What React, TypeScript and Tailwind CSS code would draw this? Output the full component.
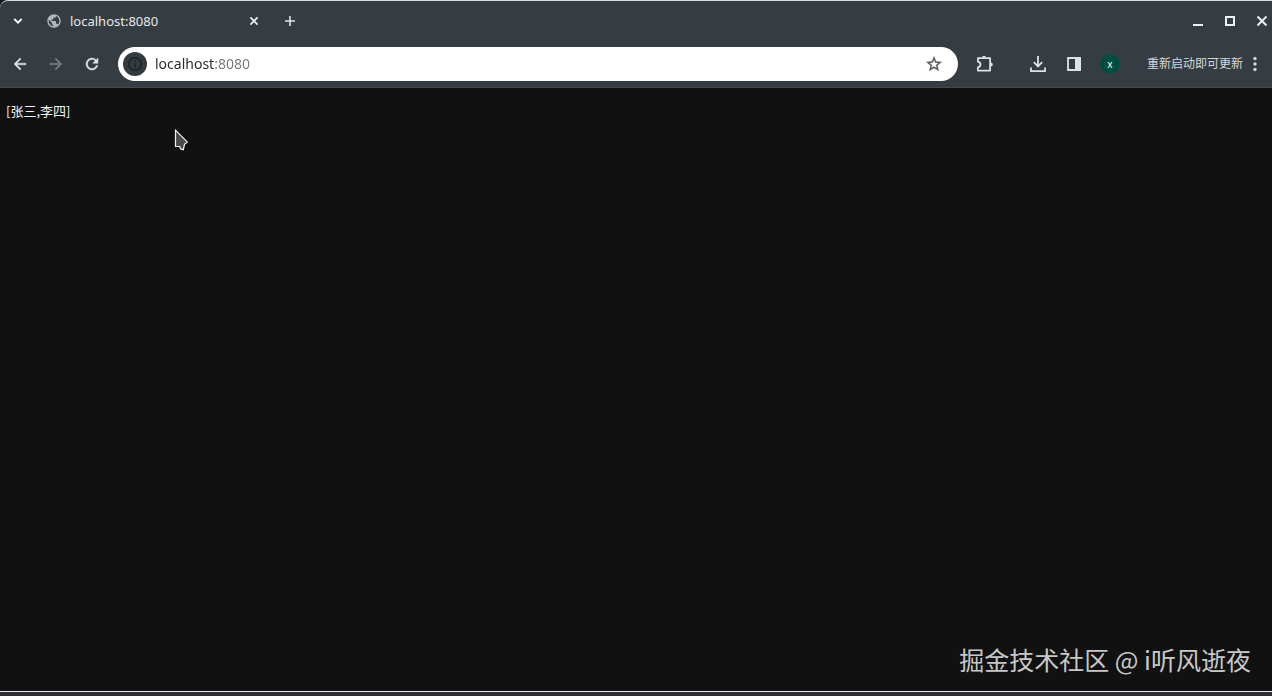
import React from "react";
import { MdArrowBack, MdArrowForward, MdPublic, MdRefresh, MdStarBorder } from "react-icons/md";

const tabs = [{ id: 1, title: "localhost:8080" }];

// El primer path de los iconos de Material es el marco vacío, se oculta para poder usar stroke
const iconClass = "h-[18px] w-[18px] [&>path[fill=none]]:hidden";

const WindowControls: React.FC = () => {
  return (
    <div className="ml-auto flex items-center gap-3 text-[#eef0f2]">
      <button type="button" aria-label="最小化" className="flex h-8 w-5 items-center justify-center">
        <svg viewBox="0 0 12 12" className="h-3 w-3">
          <path d="M1 9h10v2H1z" fill="currentColor" />
        </svg>
      </button>
      <button type="button" aria-label="最大化" className="flex h-8 w-5 items-center justify-center">
        <svg viewBox="0 0 12 12" className="h-3 w-3" fill="none" stroke="currentColor" strokeWidth="2">
          <path d="M2 2h8v8H2z" />
        </svg>
      </button>
      <button type="button" aria-label="关闭窗口" className="flex h-8 w-5 items-center justify-center">
        <svg viewBox="0 0 12 12" className="h-3 w-3" fill="none" stroke="currentColor" strokeWidth="2">
          <path d="M1.5 1.5l9 9M10.5 1.5l-9 9" />
        </svg>
      </button>
    </div>
  );
};

const TabStrip: React.FC = () => {
  return (
    <div className="flex h-10 items-center pl-1">
      <button type="button" aria-label="搜索标签页" className="flex h-7 w-7 items-center justify-center text-white">
        <svg viewBox="0 0 10 10" className="h-[10px] w-[10px]" fill="none" stroke="currentColor" strokeWidth="1.8">
          <path d="M1.3 3l3.7 3.7L8.7 3" />
        </svg>
      </button>
      {tabs.map((tab) => (
        <div key={tab.id} className="ml-[14px] flex w-[216px] items-center">
          <MdPublic className="h-4 w-4 text-[#b4b7ba]" />
          <span className="ml-2 text-[13px] leading-5 text-[#e6e8ea]">{tab.title}</span>
          <button
            type="button"
            aria-label="关闭标签页"
            className="ml-auto flex h-4 w-4 items-center justify-center text-[#eef0f2]"
          >
            <svg viewBox="0 0 10 10" className="h-[10px] w-[10px]" fill="none" stroke="currentColor" strokeWidth="1.7">
              <path d="M1.4 1.4l7.2 7.2M8.6 1.4L1.4 8.6" />
            </svg>
          </button>
        </div>
      ))}
      <button
        type="button"
        aria-label="打开新的标签页"
        className="ml-[14px] flex h-7 w-7 items-center justify-center text-[#dfe2e4]"
      >
        <svg viewBox="0 0 12 12" className="h-3 w-3" fill="none" stroke="currentColor" strokeWidth="1.6">
          <path d="M6 1v10M1 6h10" />
        </svg>
      </button>
      <WindowControls />
    </div>
  );
};

const AddressBar: React.FC = () => {
  return (
    <div className="ml-2 flex h-[34px] flex-1 items-center rounded-full bg-white pl-[5px] pr-[15px]">
      <button
        type="button"
        aria-label="查看网站信息"
        className="flex h-6 w-6 items-center justify-center rounded-full bg-[#343a3f] text-[#1c2024]"
      >
        <svg viewBox="0 0 16 16" className="h-4 w-4" fill="none" stroke="currentColor" strokeWidth="1.4">
          <circle cx="8" cy="8" r="6.2" />
          <path d="M8 7.2v4M8 4.6v1.5" />
        </svg>
      </button>
      {/* El host va en oscuro y el puerto en gris */}
      <input
        type="text"
        aria-label="地址和搜索栏"
        defaultValue="localhost:8080"
        className="ml-2 min-w-0 flex-1 bg-[linear-gradient(to_right,#26282b_60px,#74777b_60px)] bg-clip-text text-sm leading-5 text-transparent outline-none"
      />
      <button type="button" aria-label="为此标签页添加书签" className="text-[#5a5d60]">
        <MdStarBorder className={iconClass} stroke="currentColor" strokeWidth="0.6" />
      </button>
    </div>
  );
};

const Toolbar: React.FC = () => {
  return (
    <div className="flex h-[47px] items-center border-b border-[#44494e] pb-px pl-[2px] text-[#dfe2e4]">
      <button type="button" aria-label="返回" className="flex h-9 w-9 items-center justify-center">
        <MdArrowBack className={iconClass} stroke="currentColor" strokeWidth="0.6" />
      </button>
      <button type="button" aria-label="前进" className="flex h-9 w-9 items-center justify-center text-[#777c80]">
        <MdArrowForward className={iconClass} stroke="currentColor" strokeWidth="0.6" />
      </button>
      <button type="button" aria-label="重新加载" className="flex h-9 w-9 items-center justify-center">
        <MdRefresh className={iconClass} stroke="currentColor" strokeWidth="0.6" />
      </button>
      <AddressBar />
      <button type="button" aria-label="扩展程序" className="ml-2 flex h-9 w-9 items-center justify-center">
        <svg viewBox="0 0 20 20" className="h-5 w-5" fill="none" stroke="currentColor" strokeWidth="1.8">
          <path
            d="M3.9 4.2h12.2v12.4H3.9v-3.2c3.4-.8 3.4-5 0-5.8z"
            strokeLinejoin="round"
          />
          <path d="M8 3.8a2 2 0 0 1 4 0zM16.8 8.4a2 2 0 0 1 0 4z" fill="currentColor" stroke="none" />
        </svg>
      </button>
      <button type="button" aria-label="下载内容" className="ml-[18px] flex h-9 w-9 items-center justify-center">
        <svg viewBox="0 0 18 18" className="h-[18px] w-[18px]" fill="none" stroke="currentColor" strokeWidth="1.8">
          <path d="M9 1v10M4.8 7.2L9 11.4l4.2-4.2M2 12.4v3.7h14v-3.7" />
        </svg>
      </button>
      <button type="button" aria-label="侧边栏" className="flex h-9 w-9 items-center justify-center">
        <svg viewBox="0 0 18 18" className="h-[18px] w-[18px]">
          <path d="M3 3h12v12H3z" fill="none" stroke="currentColor" strokeWidth="1.8" />
          <path d="M10 2h6v14h-6z" fill="currentColor" />
        </svg>
      </button>
      <button type="button" aria-label="个人资料" className="flex h-9 w-9 items-center justify-center">
        <span className="flex h-5 w-5 items-center justify-center rounded-full bg-[#004d40] text-[10px] leading-3 text-white">
          x
        </span>
      </button>
      <button type="button" className="ml-[19px] mr-[9px] flex h-9 items-center gap-1 text-xs text-[#d5d8db]">
        重新启动即可更新
        <svg viewBox="0 0 16 18" className="h-[18px] w-4" fill="currentColor">
          <circle cx="8" cy="3.5" r="1.7" />
          <circle cx="8" cy="9" r="1.7" />
          <circle cx="8" cy="14.5" r="1.7" />
        </svg>
      </button>
    </div>
  );
};

const App: React.FC = () => {
  return (
    <div className="flex h-screen flex-col bg-[#111111] font-['Noto_Sans','Noto_Sans_CJK_SC',sans-serif]">
      <header className="rounded-tl-lg border-t border-[#cfdcdc] bg-[#353c42]">
        <TabStrip />
        <Toolbar />
      </header>

      <main className="relative flex flex-1 flex-col justify-between overflow-hidden">
        <pre className="px-[6px] pt-[13px] font-['Noto_Sans_CJK_SC',sans-serif] text-[13px] leading-5 text-[#f4f4f4]">
          [张三,李四]
        </pre>

        {/* Cursor */}
        <svg viewBox="0 0 14 22" className="absolute left-[174px] top-[41px] h-[22px] w-[14px]">
          <path
            d="M1.5 1.2v16.3h4.2l1 2.4 2.6.8 1.2-5.4 2.8-2.2z"
            fill="#4a4a4a"
            stroke="#f2f2f2"
            strokeWidth="1.2"
          />
        </svg>

        <p className="pb-[14px] pr-[21px] text-right font-['Noto_Sans_CJK_SC',sans-serif] text-[25px] leading-9 text-[#c8c8c8]">
          掘金技术社区 @ i听风逝夜
        </p>
      </main>

      <footer className="h-[5px] border-t border-[#e8e8e8] bg-[#333135]"></footer>
    </div>
  );
};

export default App;
